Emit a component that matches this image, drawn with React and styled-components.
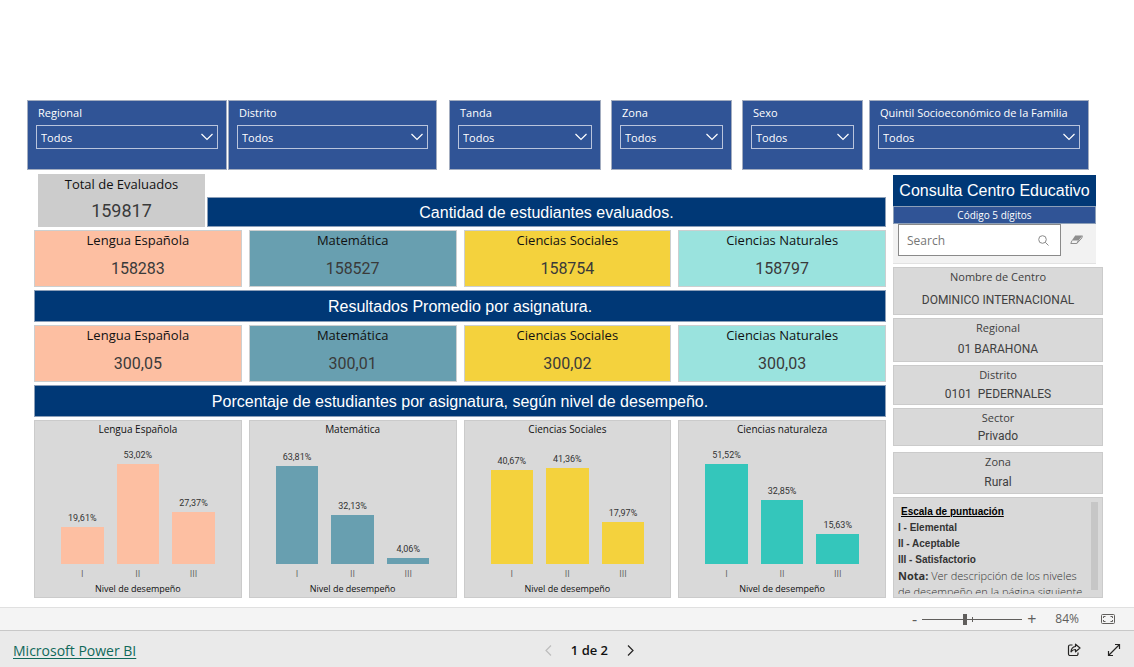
import React from 'react';
import styled, { createGlobalStyle } from 'styled-components';

const ui = '"Open Sans", "Noto Sans", sans-serif';
const din = 'Roboto, "Liberation Sans", sans-serif';
const arial = '"Liberation Sans", Arial, sans-serif';

const GlobalStyle = createGlobalStyle`
* {
box-sizing: border-box;
}
body {
margin: 0;
background: #ffffff;
font-family: ${ui};
}
button, input, select {
font-family: inherit;
margin: 0;
}
h2, h3 {
margin: 0;
font-weight: normal;
}
p, dl, dt, dd {
margin: 0;
}
`;

const Page = styled.div`
display: flex;
flex-direction: column;
min-height: 100vh;
`;

const Report = styled.main`
flex: 1;
padding: 100px 31px 9px 27px;
`;

const Filters = styled.div`
display: flex;
padding-right: 14px;
`;

const FilterBox = styled.label`
display: flex;
flex-direction: column;
flex: ${props => props.$size} 1 ${props => props.$size}px;
min-width: 0;
height: 70px;
margin-left: ${props => props.$space || 0}px;
padding: 5px 8px;
background: #305496;
border: 1px solid #a3adc0;
color: #ffffff;
font-size: 11px;
line-height: 14px;
white-space: nowrap;
`;

const FilterName = styled.span`
padding-left: 2px;
margin-bottom: 5px;
`;

const SelectWrap = styled.span`
position: relative;
display: block;
`;

const Select = styled.select`
appearance: none;
display: block;
width: 100%;
height: 24px;
padding: 0 24px 0 4px;
background: transparent;
border: 1px solid #b9c4dc;
border-radius: 0;
color: #ffffff;
font-size: 11px;
`;

const Chevron = styled.svg`
position: absolute;
right: 5px;
top: 8px;
pointer-events: none;
`;

const Body = styled.div`
display: grid;
grid-template-columns: minmax(0, 852fr) minmax(0, 210fr);
gap: 7px;
padding: 4px 0 0 7px;
`;

const Results = styled.div`
display: flex;
flex-direction: column;
gap: 3px;
`;

const TotalRow = styled.div`
display: flex;
align-items: flex-end;
gap: 2px;
padding-left: 4px;
`;

const Banner = styled.h2`
display: flex;
align-items: center;
justify-content: center;
flex: ${props => (props.$fill ? 1 : 'none')};
height: ${props => (props.$fill ? 30 : 32)}px;
padding-top: 2px;
background: #003876;
border: 1px solid #8c9fb8;
color: #ffffff;
font-family: ${arial};
font-size: 16px;
line-height: 20px;
`;

const CardRow = styled.div`
display: grid;
grid-template-columns: repeat(4, minmax(0, 1fr));
gap: 7px;
`;

const Card = styled.dl`
display: flex;
flex-direction: column;
height: 57px;
background: ${props => props.$color};
border: 1px solid #cccfd0;
text-align: center;
`;

const TotalCard = styled(Card)`
width: 167px;
height: 53px;
border-color: #cccccc;
`;

const CardName = styled.dt`
color: #111111;
font-size: 13px;
line-height: 18px;
`;

const CardValue = styled.dd`
display: flex;
flex: 1;
align-items: center;
justify-content: center;
padding-top: 2px;
color: #3a3a3a;
font-family: ${din};
font-size: ${props => (props.$large ? 18 : 16)}px;
line-height: 20px;
`;

const Chart = styled.section`
height: 178px;
background: #d9d9d9;
border: 1px solid #cbcbcb;
text-align: center;
`;

const ChartTitle = styled.h3`
color: #111111;
font-size: 10px;
line-height: 16px;
`;

const Plot = styled.div`
display: grid;
grid-template-columns: repeat(3, 1fr);
gap: 13px;
align-items: end;
height: 127px;
padding: 0 26px;
`;

const BarLabel = styled.div`
margin: 0 -6px 3px;
color: #333333;
font-family: ${din};
font-size: 9px;
line-height: 12px;
`;

const Bar = styled.div`
background: ${props => props.$color};
`;

const Axis = styled.div`
display: grid;
grid-template-columns: repeat(3, 1fr);
gap: 13px;
padding: 4px 26px 2px;
color: #605e5c;
font-size: 9px;
line-height: 12px;
`;

const AxisTitle = styled.p`
color: #111111;
font-size: 9px;
line-height: 14px;
`;

const Side = styled.aside`
display: flex;
flex-direction: column;
gap: 3px;
padding-top: 1px;
`;

const SearchPanel = styled.div`
height: 89px;
margin-right: 7px;
background: #f2f2f2;
border-bottom: 1px solid #e2e2e2;
`;

const SideTitle = styled.h2`
background: #003876;
color: #ffffff;
font-family: ${arial};
font-size: 16px;
line-height: 31px;
text-align: center;
white-space: nowrap;
`;

const SideSubtitle = styled.h3`
background: #305496;
border: 1px solid #8c9fb8;
color: #ffffff;
font-size: 10px;
line-height: 16px;
text-align: center;
`;

const SearchRow = styled.div`
display: flex;
align-items: center;
padding: 0 12px 0 5px;
gap: 9px;
`;

const SearchBox = styled.label`
display: flex;
align-items: center;
flex: 1;
min-width: 0;
height: 32px;
padding: 0 11px 0 8px;
background: #ffffff;
border: 1px solid #8a8a8a;
`;

const SearchInput = styled.input`
flex: 1;
min-width: 0;
padding: 0;
border: 0;
outline: 0;
background: transparent;
color: #605e5c;
font-size: 12px;
&::placeholder {
color: #767676;
opacity: 1;
}
`;

const IconButton = styled.button`
display: flex;
align-items: center;
justify-content: center;
padding: 0;
border: 0;
background: transparent;
color: ${props => props.$color || '#252423'};
font-size: 16px;
line-height: 16px;
`;

const Info = styled.dl`
display: flex;
flex-direction: column;
height: ${props => props.$height}px;
margin-top: ${props => (props.$spaced ? 3 : 0)}px;
background: #d9d9d9;
border: 1px solid #cbcbcb;
text-align: center;
`;

const InfoName = styled.dt`
color: #404040;
font-size: 11px;
line-height: 17px;
`;

const InfoValue = styled.dd`
display: flex;
flex: 1;
align-items: center;
justify-content: center;
color: #404040;
font-family: ${din};
font-size: 12px;
line-height: 14px;
white-space: pre;
`;

const Scale = styled.section`
display: flex;
height: 101px;
padding: 4px 4px 3px;
background: #d9d9d9;
border: 1px solid #cbcbcb;
`;

const ScaleText = styled.div`
flex: 1;
min-width: 0;
overflow: hidden;
padding-top: 2px;
color: #333333;
font-family: ${arial};
font-size: 10px;
font-weight: bold;
line-height: 16px;
white-space: nowrap;
`;

const ScaleTitle = styled.h3`
padding-left: 3px;
color: #000000;
font-weight: bold;
font-size: 10px;
text-decoration: underline;
`;

const Note = styled.p`
font-family: ${ui};
font-size: 11px;
font-weight: 300;
b {
font-weight: 700;
}
`;

const Scrollbar = styled.div`
width: 7px;
height: 88px;
background: #c6c6c6;
`;

const ZoomBar = styled.div`
display: flex;
align-items: center;
justify-content: flex-end;
height: 23px;
padding-right: 19px;
background: #f4f4f4;
border-top: 1px solid #e0e0e0;
color: #605e5c;
`;

const ZoomSlider = styled.input`
appearance: none;
width: 100px;
height: 11px;
margin: 0 5px;
background: linear-gradient(#605e5c, #605e5c) 50px 3px / 1px 5px no-repeat,
linear-gradient(#605e5c, #605e5c) 0 5px / 100% 1px no-repeat;
&::-webkit-slider-thumb {
appearance: none;
width: 4px;
height: 11px;
background: #605e5c;
}
`;

const ZoomValue = styled.span`
margin: 0 22px 0 19px;
font-size: 12px;
line-height: 16px;
`;

const Footer = styled.footer`
display: flex;
align-items: center;
height: 37px;
padding: 2px 13px 0;
background: #eaeaea;
border-top: 1px solid #c8c8c8;
`;

const Brand = styled.div`
flex: 0 0 48%;
`;

const BrandLink = styled.a`
color: #10695a;
font-size: 14px;
line-height: 18px;
text-underline-offset: 2px;
`;

const Pager = styled.nav`
display: flex;
align-items: center;
gap: 19px;
color: #111111;
font-size: 13px;
font-weight: 600;
line-height: 18px;
`;

const Actions = styled.div`
display: flex;
gap: 26px;
margin-left: auto;
`;

const filters = [
    { name: 'Regional', size: 200 },
    { name: 'Distrito', size: 209, space: 1 },
    { name: 'Tanda', size: 152, space: 12 },
    { name: 'Zona', size: 121, space: 10 },
    { name: 'Sexo', size: 121, space: 10 },
    { name: 'Quintil Socioeconómico de la Familia', size: 220, space: 6 },
];

const peach = '#fdbfa2';
const blue = '#689fb0';
const yellow = '#f4d23d';
const aqua = '#9ae3de';
const turquoise = '#34c6bb';

const subjects = [
    { name: 'Lengua Española', color: peach, count: '158283', average: '300,05' },
    { name: 'Matemática', color: blue, count: '158527', average: '300,01' },
    { name: 'Ciencias Sociales', color: yellow, count: '158754', average: '300,02' },
    { name: 'Ciencias Naturales', color: aqua, count: '158797', average: '300,03' },
];

// top is the height in pixels of the tallest bar of each chart
const charts = [
    { name: 'Lengua Española', color: peach, top: 100, values: [19.61, 53.02, 27.37] },
    { name: 'Matemática', color: blue, top: 98, values: [63.81, 32.13, 4.06] },
    { name: 'Ciencias Sociales', color: yellow, top: 96, values: [40.67, 41.36, 17.97] },
    { name: 'Ciencias naturaleza', color: turquoise, top: 100, values: [51.52, 32.85, 15.63] },
];

const levels = ['I', 'II', 'III'];

const center = [
    { name: 'Nombre de Centro', value: 'DOMINICO INTERNACIONAL', height: 48 },
    { name: 'Regional', value: '01 BARAHONA', height: 44 },
    { name: 'Distrito', value: '0101  PEDERNALES', height: 40 },
    { name: 'Sector', value: 'Privado', height: 38 },
    { name: 'Zona', value: 'Rural', height: 42, spaced: true },
];

function Filter (props){
    return(
        <FilterBox $size={props.size} $space={props.space}>
            <FilterName>{props.name}</FilterName>
            <SelectWrap>
                <Select>
                    <option>Todos</option>
                </Select>
                <Chevron width="12" height="8" viewBox="0 0 12 8" fill="none" stroke="#ffffff" strokeWidth="1.2">
                    <path d="M0.5 1L6 6.5L11.5 1" />
                </Chevron>
            </SelectWrap>
        </FilterBox>
    );
}

function BarChart (props){
    const max = Math.max(...props.values);

    return(
        <Chart>
            <ChartTitle>{props.name}</ChartTitle>
            <Plot>
                {props.values.map((value, i) => (
                    <div key={levels[i]}>
                        <BarLabel>{value.toFixed(2).replace('.', ',')}%</BarLabel>
                        <Bar $color={props.color} style={{ height: Math.round(value / max * props.top) }} />
                    </div>
                ))}
            </Plot>
            <Axis>
                {levels.map(level => <span key={level}>{level}</span>)}
            </Axis>
            <AxisTitle>Nivel de desempeño</AxisTitle>
        </Chart>
    );
}

function SubjectCards (props){
    return(
        <CardRow>
            {subjects.map(subject => (
                <Card key={subject.name} $color={subject.color}>
                    <CardName>{subject.name}</CardName>
                    <CardValue>{subject[props.field]}</CardValue>
                </Card>
            ))}
        </CardRow>
    );
}

function CenterLookup (){
    return(
        <Side>
            <SearchPanel>
                <SideTitle>Consulta Centro Educativo</SideTitle>
                <SideSubtitle>Código 5 dígitos</SideSubtitle>
                <SearchRow>
                    <SearchBox>
                        <SearchInput type="text" placeholder="Search" aria-label="Search" />
                        <svg width="11" height="11" viewBox="0 0 11 11" fill="none" stroke="#8a8a8a">
                            <circle cx="4.5" cy="4.5" r="3.8" />
                            <path d="M7.3 7.3L10.5 10.5" />
                        </svg>
                    </SearchBox>
                    <IconButton type="button" aria-label="Borrar">
                        <svg width="14" height="10" viewBox="0 0 14 10">
                            <path d="M5.2 0.5H12.5L8.6 5.5H1.8Z" fill="#8e8e8e" />
                            <path d="M2 5.5L0.8 8.5H6.8L8.4 5.5M6.8 8.5L11.8 3L12.4 0.8" fill="none" stroke="#8e8e8e" />
                        </svg>
                    </IconButton>
                </SearchRow>
            </SearchPanel>
            {center.map(item => (
                <Info key={item.name} $height={item.height} $spaced={item.spaced}>
                    <InfoName>{item.name}</InfoName>
                    <InfoValue>{item.value}</InfoValue>
                </Info>
            ))}
            <Scale>
                <ScaleText>
                    <ScaleTitle>Escala de puntuación</ScaleTitle>
                    <p>I - Elemental</p>
                    <p>II - Aceptable</p>
                    <p>III - Satisfactorio</p>
                    <Note><b>Nota:</b> Ver descripción de los niveles<br />de desempeño en la página siguiente</Note>
                </ScaleText>
                <Scrollbar />
            </Scale>
        </Side>
    );
}

function App (){
    return(
        <Page>
            <GlobalStyle />
            <Report>
                <Filters>
                    {filters.map(filter => <Filter key={filter.name} {...filter} />)}
                </Filters>
                <Body>
                    <Results>
                        <TotalRow>
                            <TotalCard $color="#cccccc">
                                <CardName>Total de Evaluados</CardName>
                                <CardValue $large>159817</CardValue>
                            </TotalCard>
                            <Banner $fill>Cantidad de estudiantes evaluados.</Banner>
                        </TotalRow>
                        <SubjectCards field="count" />
                        <Banner>Resultados Promedio por asignatura.</Banner>
                        <SubjectCards field="average" />
                        <Banner>Porcentaje de estudiantes por asignatura, según nivel de desempeño.</Banner>
                        <CardRow>
                            {charts.map(chart => <BarChart key={chart.name} {...chart} />)}
                        </CardRow>
                    </Results>
                    <CenterLookup />
                </Body>
            </Report>
            <ZoomBar>
                <IconButton type="button" $color="#605e5c">-</IconButton>
                <ZoomSlider type="range" min="0" max="100" defaultValue="42" aria-label="Zoom" />
                <IconButton type="button" $color="#605e5c">+</IconButton>
                <ZoomValue>84%</ZoomValue>
                <IconButton type="button" $color="#605e5c" aria-label="Ajustar a la página">
                    <svg width="14" height="10" viewBox="0 0 14 10" fill="none" stroke="currentColor">
                        <rect x="0.5" y="0.5" width="13" height="9" rx="1" />
                        <path d="M2.5 4V2.5H4.5M9.5 2.5H11.5V4M11.5 6V7.5H9.5M4.5 7.5H2.5V6" />
                    </svg>
                </IconButton>
            </ZoomBar>
            <Footer>
                <Brand>
                    <BrandLink href="#powerbi">Microsoft Power BI</BrandLink>
                </Brand>
                <Pager>
                    <IconButton type="button" $color="#bdbdbd" aria-label="Página anterior">
                        <svg width="7" height="11" viewBox="0 0 7 11" fill="none" stroke="currentColor" strokeWidth="1.2">
                            <path d="M6 0.5L1 5.5L6 10.5" />
                        </svg>
                    </IconButton>
                    <span>1 de 2</span>
                    <IconButton type="button" aria-label="Página siguiente">
                        <svg width="7" height="11" viewBox="0 0 7 11" fill="none" stroke="currentColor" strokeWidth="1.2">
                            <path d="M1 0.5L6 5.5L1 10.5" />
                        </svg>
                    </IconButton>
                </Pager>
                <Actions>
                    <IconButton type="button" aria-label="Compartir">
                        <svg width="14" height="14" viewBox="0 0 14 14" fill="none" stroke="currentColor" strokeWidth="1.2" strokeLinejoin="round">
                            <path d="M5.5 2H3A1.5 1.5 0 0 0 1.5 3.5V11A1.5 1.5 0 0 0 3 12.5H9.5A1.5 1.5 0 0 0 11 11V9.5" />
                            <path d="M8.5 1.2L13 5L8.5 8.8V6.5C6.5 6.4 5.2 7 4 8.8C4.2 5.5 5.8 3.8 8.5 3.5Z" />
                        </svg>
                    </IconButton>
                    <IconButton type="button" aria-label="Pantalla completa">
                        <svg width="14" height="14" viewBox="0 0 14 14" fill="none" stroke="currentColor" strokeWidth="1.2">
                            <path d="M1.5 12.5L12.5 1.5M8 1.5H12.5V6M1.5 8V12.5H6" />
                        </svg>
                    </IconButton>
                </Actions>
            </Footer>
        </Page>
    );
}

export default App;
